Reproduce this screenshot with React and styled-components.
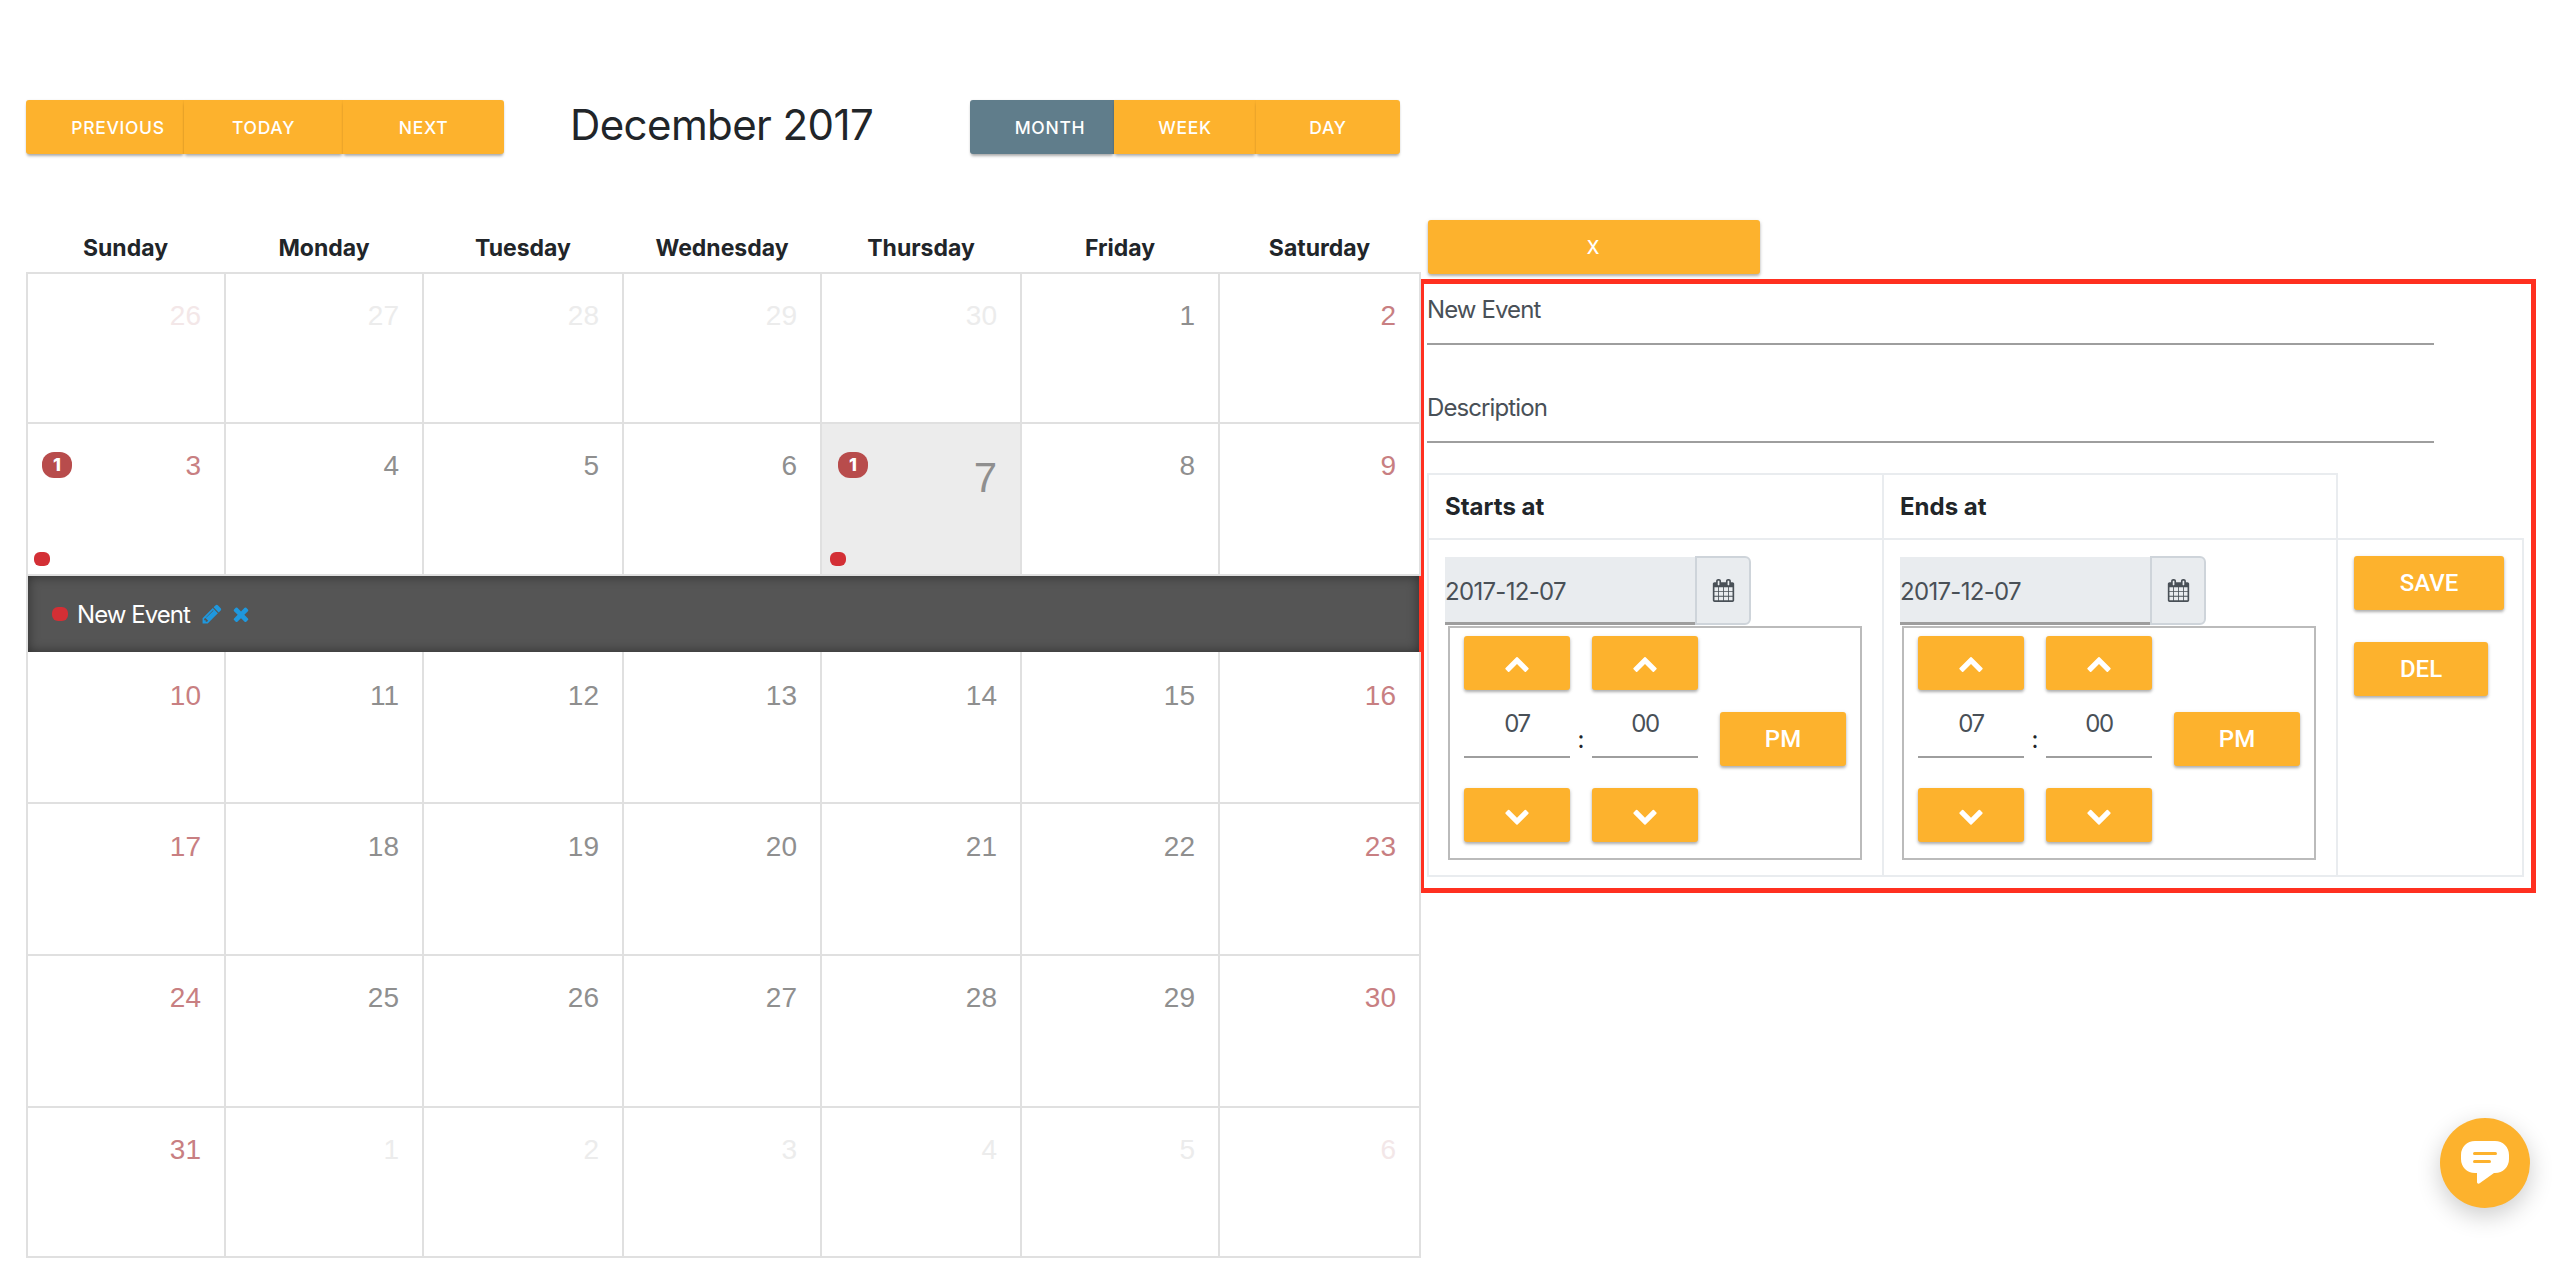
import React from "react";
import styled, { createGlobalStyle } from "styled-components";

const Global = createGlobalStyle`
  html, body { margin: 0; padding: 0; background: #fff; }
  body { font-family: "Inter", "Liberation Sans", sans-serif; color: #212529; }
  * { box-sizing: border-box; }
`;

const ORANGE = "#fdb22d";
const BTN_SHADOW = "0 2px 3px rgba(0,0,0,.28), 0 1px 5px rgba(0,0,0,.08)";
const COLUMNS = "198px 198px 200px 198px 200px 198px 201px";

const Page = styled.div`
  display: flex;
  align-items: flex-start;
  width: 2560px;
  height: 1280px;
  padding: 100px 0 0 26px;
  overflow: hidden;
  position: relative;
`;
const CalendarColumn = styled.div`
  width: 1396px;
  flex: none;
`;
const Toolbar = styled.div`
  display: flex;
  align-items: flex-start;
  height: 54px;
`;
const ButtonGroup = styled.div`
  display: flex;
`;
const GroupButton = styled.button`
  width: ${(p) => p.$w}px;
  height: 54px;
  border: 0;
  padding: 0 0 0 ${(p) => p.$shift || 0}px;
  margin: 0;
  background: ${(p) => (p.$active ? "#607d8b" : ORANGE)};
  color: #fff;
  font: 500 17.5px "Inter", sans-serif;
  letter-spacing: 0.7px;
  text-transform: uppercase;
  box-shadow: 0 3px 3px -1px rgba(0, 0, 0, 0.32), 0 0 2px rgba(0, 0, 0, 0.08);
  border-radius: ${(p) => (p.$first ? "3px 0 0 3px" : p.$last ? "0 3px 3px 0" : "0")};
`;
const Title = styled.h2`
  width: 466px;
  margin: 0;
  padding: 0 0 0 66px;
  font: 400 42px/50px "Inter", sans-serif;
  color: #212529;
  letter-spacing: -0.6px;
  white-space: nowrap;
`;
const WeekHead = styled.div`
  display: grid;
  grid-template-columns: 199px 198px 200px 198px 200px 198px 201px;
  height: 118px;
  align-items: end;
  padding-bottom: 10px;
`;
const DayName = styled.div`
  text-align: center;
  font: 700 23px/28px "Inter", sans-serif;
  color: #212529;
`;
const Weeks = styled.div`
  border-top: 2px solid #e0e0e0;
  border-left: 2px solid #e0e0e0;
  width: 1395px;
`;
const WeekRow = styled.div`
  display: grid;
  grid-template-columns: ${COLUMNS};
  height: ${(p) => p.$h}px;
`;
const Cell = styled.div`
  position: relative;
  border-right: 2px solid #e0e0e0;
  border-bottom: 2px solid #e0e0e0;
  background: ${(p) => (p.$today ? "#ececec" : "#fff")};
  padding: ${(p) => (p.$today ? 30 : p.$pad)}px 23px 0 0;
  text-align: right;
`;
const DayNumber = styled.span`
  display: block;
  font: 400 ${(p) => (p.$today ? "42px/48px" : "28px/32px")} "Liberation Sans", sans-serif;
  color: ${(p) => {
    if (p.$dim) return p.$weekend ? "#f3e7e8" : "#ececec";
    return p.$weekend ? "#c87f82" : "#8f8f8f";
  }};
`;
const Badge = styled.span`
  position: absolute;
  left: ${(p) => (p.$today ? 16 : 14)}px;
  top: 28px;
  width: 30px;
  height: 26px;
  border-radius: 12px;
  background: #b84c4c;
  color: #fff;
  font: 800 18px/26px "Inter", sans-serif;
  text-align: center;
`;
const EventDot = styled.span`
  position: absolute;
  left: ${(p) => (p.$today ? 8 : 6)}px;
  bottom: 8px;
  width: 16px;
  height: 14px;
  border-radius: 6px;
  background: #d32f35;
`;
const EventBar = styled.div`
  display: flex;
  align-items: center;
  width: 1391px;
  height: 76px;
  padding-left: 24px;
  background: #555;
  box-shadow: inset 0 0 12px rgba(0, 0, 0, 0.45);
  color: #fff;
  font: 400 24px "Inter", sans-serif;
  letter-spacing: -0.95px;
`;
const BarDot = styled.span`
  width: 16px;
  height: 14px;
  border-radius: 6px;
  background: #d32f35;
  margin-right: 9px;
`;
const BarIcon = styled.svg`
  width: ${(p) => p.$size}px;
  height: ${(p) => p.$size}px;
  margin-left: ${(p) => p.$gap}px;
  fill: #1f98de;
`;
const SidePanel = styled.div`
  flex: none;
  margin: 120px 0 0 -3px;
  width: 1117px;
`;
const CloseButton = styled.button`
  display: block;
  width: 332px;
  height: 54px;
  margin: 0 0 5px 9px;
  padding: 0 2px 0 0;
  border: 0;
  border-radius: 3px;
  background: ${ORANGE};
  color: #fff;
  font: 500 18px "Inter", sans-serif;
  box-shadow: ${BTN_SHADOW};
`;
const EventForm = styled.div`
  border: 5px solid #ff3020;
  height: 614px;
  padding: 0 0 0 3px;
`;
const TextField = styled.div`
  width: 1007px;
  height: 61px;
  margin-top: ${(p) => p.$top}px;
  padding-top: 8px;
  border-bottom: 2px solid #9e9e9e;
  font: 400 24px/36px "Inter", sans-serif;
  letter-spacing: -0.9px;
  color: #495057;
`;
const Table = styled.table`
  border-collapse: collapse;
  table-layout: fixed;
  width: 1095px;
  margin-top: 30px;
`;
const HeadCell = styled.th`
  height: 65px;
  padding: 0 16px;
  text-align: left;
  font: 700 24px "Inter", sans-serif;
  color: #212529;
  border: ${(p) => (p.$blank ? "0" : "2px solid #e9ecef")};
  width: ${(p) => p.$w}px;
`;
const BodyCell = styled.td`
  height: 337px;
  padding: 17px 0 0 16px;
  vertical-align: top;
  border: 2px solid #e9ecef;
`;
const DateGroup = styled.div`
  display: flex;
  align-items: flex-start;
`;
const DateInput = styled.div`
  width: 250px;
  height: 68px;
  background: #e9ecef;
  border-bottom: 3px solid #9e9e9e;
  font: 400 24px/70px "Inter", sans-serif;
  letter-spacing: -0.7px;
  color: #495057;
`;
const DateAddon = styled.div`
  display: flex;
  align-items: center;
  justify-content: center;
  width: 56px;
  height: 69px;
  margin-top: -1px;
  background: #e9ecef;
  border: 2px solid #ced4da;
  border-radius: 0 6px 6px 0;
`;
const CalendarIcon = styled.svg`
  width: 23px;
  height: 23px;
  fill: #495057;
`;
const Picker = styled.div`
  display: grid;
  grid-template-columns: 106px 22px 106px 22px 126px;
  grid-template-rows: 54px 54px 54px;
  row-gap: 22px;
  width: 414px;
  height: 234px;
  margin: 1px 0 0 ${(p) => p.$inset}px;
  padding: 8px 0 0 14px;
  border: 2px solid #bbb;
`;
const ActionButton = styled.button`
  grid-column: ${(p) => p.$col || "auto"};
  grid-row: ${(p) => p.$row || "auto"};
  display: flex;
  align-items: center;
  justify-content: center;
  width: ${(p) => p.$w || 106}px;
  height: 54px;
  padding: 0;
  border: 0;
  border-radius: 3px;
  background: ${ORANGE};
  color: #fff;
  font: 500 24px "Roboto", sans-serif;
  box-shadow: ${BTN_SHADOW};
`;
const ChevronIcon = styled.svg`
  width: 26px;
  height: 26px;
  fill: #fff;
`;
const TimeValue = styled.div`
  grid-column: ${(p) => p.$col};
  grid-row: 2;
  height: 46px;
  border-bottom: 2px solid #9e9e9e;
  text-align: center;
  font: 400 24px/24px "Inter", sans-serif;
  letter-spacing: -1.5px;
  color: #495057;
`;
const Colon = styled.div`
  grid-column: 2;
  grid-row: 2;
  text-align: center;
  font: 400 24px/56px "Inter", sans-serif;
  color: #212529;
`;
const Actions = styled.div`
  display: flex;
  flex-direction: column;
  align-items: flex-start;
  gap: 32px;
  margin-top: -1px;
`;
const ChatButton = styled.button`
  position: absolute;
  left: 2440px;
  top: 1118px;
  width: 90px;
  height: 90px;
  padding: 0;
  border: 0;
  border-radius: 50%;
  background: ${ORANGE};
  box-shadow: 0 8px 24px rgba(0, 0, 0, 0.2);
  display: flex;
  align-items: center;
  justify-content: center;
`;

const PATHS = {
  pencil: "M491 1536l91-91-235-235-91 91v107h128v128h107zm523-928q0-22-22-22-10 0-17 7l-542 542q-7 7-7 17 0 22 22 22 10 0 17-7l542-542q7-7 7-17zm-54-192l416 416-832 832h-416v-416zm683 96q0 53-37 90l-166 166-416-416 166-165q36-38 90-38 53 0 91 38l235 234q37 39 37 91z",
  times: "M1490 1322q0 40-28 68l-136 136q-28 28-68 28t-68-28l-294-294-294 294q-28 28-68 28t-68-28l-136-136q-28-28-28-68t28-68l294-294-294-294q-28-28-28-68t28-68l136-136q28-28 68-28t68 28l294 294 294-294q28-28 68-28t68 28l136 136q28 28 28 68t-28 68l-294 294 294 294q28 28 28 68z",
  up: "M1683 1331l-166 165q-19 19-45 19t-45-19l-531-531-531 531q-19 19-45 19t-45-19l-166-165q-19-19-19-45.5t19-45.5l742-741q19-19 45-19t45 19l742 741q19 19 19 45.5t-19 45.5z",
  down: "M1683 808l-742 741q-19 19-45 19t-45-19l-742-741q-19-19-19-45.5t19-45.5l166-165q19-19 45-19t45 19l531 531 531-531q19-19 45-19t45 19l166 165q19 19 19 45.5t-19 45.5z",
  calendar: "M192 1664h288v-288h-288v288zm352 0h320v-288h-320v288zm-352-352h288v-320h-288v320zm352 0h320v-320h-320v320zm-352-384h288v-288h-288v288zm736 736h320v-288h-320v288zm-384-736h320v-288h-320v288zm768 736h288v-288h-288v288zm-384-352h320v-320h-320v320zm-352-864v-288q0-13-9.5-22.5t-22.5-9.5h-64q-13 0-22.5 9.5t-9.5 22.5v288q0 13 9.5 22.5t22.5 9.5h64q13 0 22.5-9.5t9.5-22.5zm736 864h288v-320h-288v320zm-384-384h320v-288h-320v288zm384 0h288v-288h-288v288zm32-480v-288q0-13-9.5-22.5t-22.5-9.5h-64q-13 0-22.5 9.5t-9.5 22.5v288q0 13 9.5 22.5t22.5 9.5h64q13 0 22.5-9.5t9.5-22.5zm384-64v1280q0 52-38 90t-90 38h-1408q-52 0-90-38t-38-90v-1280q0-52 38-90t90-38h128v-96q0-66 47-113t113-47h64q66 0 113 47t47 113v96h384v-96q0-66 47-113t113-47h64q66 0 113 47t47 113v96h128q52 0 90 38t38 90z",
};

const DAYS = ["Sunday", "Monday", "Tuesday", "Wednesday", "Thursday", "Friday", "Saturday"];
const d = (n, dim) => ({ n, dim });
const WEEKS = [
  [d(26, 1), d(27, 1), d(28, 1), d(29, 1), d(30, 1), d(1), d(2)],
  [d(3), d(4), d(5), d(6), d(7), d(8), d(9)],
  [d(10), d(11), d(12), d(13), d(14), d(15), d(16)],
  [d(17), d(18), d(19), d(20), d(21), d(22), d(23)],
  [d(24), d(25), d(26), d(27), d(28), d(29), d(30)],
  [d(31), d(1, 1), d(2, 1), d(3, 1), d(4, 1), d(5, 1), d(6, 1)],
];

function Week({ days, h = 152, pad = 26 }) {
  return (
    <WeekRow $h={h}>
      {days.map((day, i) => {
        const today = !day.dim && day.n === 7;
        const hasEvent = !day.dim && (day.n === 3 || day.n === 7);
        return (
          <Cell key={i} $today={today} $pad={pad}>
            <DayNumber $dim={day.dim} $weekend={i === 0 || i === 6} $today={today}>{day.n}</DayNumber>
            {hasEvent && <Badge $today={today}>1</Badge>}
            {hasEvent && <EventDot $today={today} />}
          </Cell>
        );
      })}
    </WeekRow>
  );
}

function Chevron({ dir }) {
  return (
    <ChevronIcon viewBox="0 0 1792 1792"><path d={PATHS[dir]} /></ChevronIcon>
  );
}

function TimeCell({ inset }) {
  return (
    <BodyCell>
      <DateGroup>
        <DateInput>2017-12-07</DateInput>
        <DateAddon>
          <CalendarIcon viewBox="0 0 1792 1792"><path d={PATHS.calendar} /></CalendarIcon>
        </DateAddon>
      </DateGroup>
      <Picker $inset={inset}>
        <ActionButton $col={1} $row={1}><Chevron dir="up" /></ActionButton>
        <ActionButton $col={3} $row={1}><Chevron dir="up" /></ActionButton>
        <TimeValue $col={1}>07</TimeValue>
        <Colon>:</Colon>
        <TimeValue $col={3}>00</TimeValue>
        <ActionButton $col={5} $row={2} $w={126}>PM</ActionButton>
        <ActionButton $col={1} $row={3}><Chevron dir="down" /></ActionButton>
        <ActionButton $col={3} $row={3}><Chevron dir="down" /></ActionButton>
      </Picker>
    </BodyCell>
  );
}

export default function App() {
  return (
    <>
      <Global />
      <Page>
        <CalendarColumn>
          <Toolbar>
            <ButtonGroup>
              <GroupButton $w={158} $shift={26} $first>Previous</GroupButton>
              <GroupButton $w={159}>Today</GroupButton>
              <GroupButton $w={161} $last>Next</GroupButton>
            </ButtonGroup>
            <Title>December 2017</Title>
            <ButtonGroup>
              <GroupButton $w={144} $shift={16} $first $active>Month</GroupButton>
              <GroupButton $w={142}>Week</GroupButton>
              <GroupButton $w={144} $last>Day</GroupButton>
            </ButtonGroup>
          </Toolbar>
          <WeekHead>
            {DAYS.map((n) => <DayName key={n}>{n}</DayName>)}
          </WeekHead>
          <Weeks>
            <Week days={WEEKS[0]} h={150} />
            <Week days={WEEKS[1]} />
            <EventBar>
              <BarDot />
              <span>New Event</span>
              <BarIcon viewBox="0 0 1792 1792" $size={22} $gap={11}><path d={PATHS.pencil} /></BarIcon>
              <BarIcon viewBox="0 0 1792 1792" $size={22} $gap={7}><path d={PATHS.times} /></BarIcon>
            </EventBar>
            <Week days={WEEKS[2]} pad={28} />
            <Week days={WEEKS[3]} pad={27} />
            <Week days={WEEKS[4]} />
            <Week days={WEEKS[5]} h={150} />
          </Weeks>
        </CalendarColumn>
        <SidePanel>
          <CloseButton>X</CloseButton>
          <EventForm>
            <TextField $top={0}>New Event</TextField>
            <TextField $top={37}>Description</TextField>
            <Table>
              <thead>
                <tr>
                  <HeadCell $w={455}>Starts at</HeadCell>
                  <HeadCell $w={454}>Ends at</HeadCell>
                  <HeadCell $w={186} $blank />
                </tr>
              </thead>
              <tbody>
                <tr>
                  <TimeCell inset={3} />
                  <TimeCell inset={2} />
                  <BodyCell>
                    <Actions>
                      <ActionButton $w={150}>SAVE</ActionButton>
                      <ActionButton $w={134}>DEL</ActionButton>
                    </Actions>
                  </BodyCell>
                </tr>
              </tbody>
            </Table>
          </EventForm>
        </SidePanel>
        <ChatButton aria-label="Chat">
          <svg width="48" height="44" viewBox="0 0 48 44">
            <path fill="#fff" d="M14 0h20c8 0 14 6 14 14v4c0 8-6 14-14 14h-1L19 42c-1 1-3 1-3 -1v-9h-2C6 32 0 26 0 18v-4C0 6 6 0 14 0z" />
            <rect x="12" y="11" width="24" height="3" rx="1.5" fill={ORANGE} />
            <rect x="12" y="19" width="18" height="3" rx="1.5" fill={ORANGE} />
          </svg>
        </ChatButton>
      </Page>
    </>
  );
}
